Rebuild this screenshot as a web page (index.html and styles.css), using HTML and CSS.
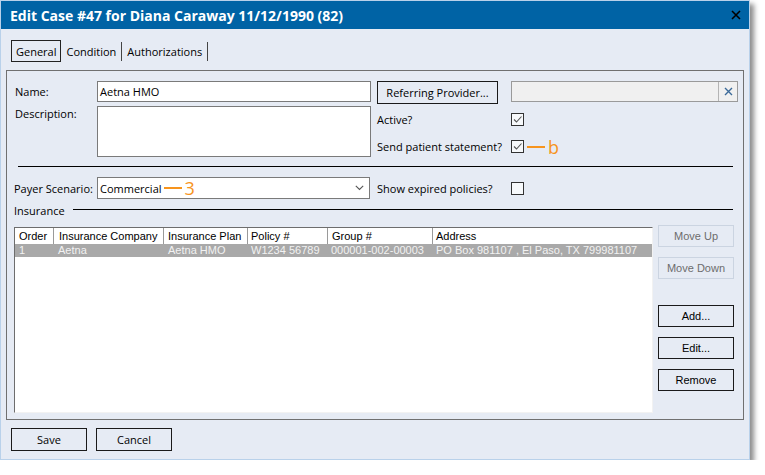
FILE: index.html
```html
<!DOCTYPE html>
<html>
<head>
<meta charset="utf-8">
<link rel="stylesheet" href="styles.css">
</head>
<body>
<div class="window">
  <div class="titlebar">
    <span class="title">Edit Case #47 for Diana Caraway 11/12/1990 (82)</span>
    <svg class="close" width="10" height="10" viewBox="0 0 10 10"><path d="M1 1 L9 9 M9 1 L1 9" stroke="#000" stroke-width="1.6" fill="none"/></svg>
  </div>
  <div class="tabs">
    <span class="tab active">General</span>
    <span class="tab">Condition</span>
    <span class="tab-sep"></span>
    <span class="tab">Authorizations</span>
    <span class="tab-sep"></span>
  </div>
  <div class="panel">
    <div class="top-grid">
      <span class="lbl name-lbl">Name:</span>
      <div class="input name-input">Aetna HMO</div>
      <button class="btn ref-btn">Referring Provider...</button>
      <div class="ref-field">
        <span class="ref-text"></span>
        <span class="ref-clear"><svg width="9" height="9" viewBox="0 0 9 9"><path d="M1 1 L8 8 M8 1 L1 8" stroke="#3b6a99" stroke-width="1.4" fill="none"/></svg></span>
      </div>
      <span class="lbl desc-lbl">Description:</span>
      <div class="textarea"></div>
      <span class="lbl rlbl row2">Active?</span>
      <span class="check row2c"><svg width="11" height="11" viewBox="0 0 11 11"><path d="M2 5.5 L4.5 8 L9.5 2.5" stroke="#555" stroke-width="1.1" fill="none"/></svg></span>
      <span class="lbl rlbl row3">Send patient statement?</span>
      <span class="check-wrap row3c">
        <span class="check"><svg width="11" height="11" viewBox="0 0 11 11"><path d="M2 5.5 L4.5 8 L9.5 2.5" stroke="#555" stroke-width="1.1" fill="none"/></svg></span>
        <span class="anno"><span class="dash"></span>b</span>
      </span>
    </div>
    <div class="divider"></div>
    <div class="payer-row">
      <span class="lbl payer-lbl">Payer Scenario:</span>
      <div class="select">
        <span class="sel-text">Commercial</span>
        <span class="anno"><span class="dash"></span>3</span>
        <svg class="chev" width="9" height="6" viewBox="0 0 9 6"><path d="M0.8 0.8 L4.5 4.5 L8.2 0.8" stroke="#555" stroke-width="1.1" fill="none"/></svg>
      </div>
      <span class="lbl rlbl">Show expired policies?</span>
      <span class="check"></span>
    </div>
    <div class="ins-head">
      <span class="ins-lbl">Insurance</span>
      <span class="ins-line"></span>
    </div>
    <div class="ins-body">
      <div class="table">
        <div class="trow thead">
          <span class="c c1">Order</span>
          <span class="c c2">Insurance Company</span>
          <span class="c c3">Insurance Plan</span>
          <span class="c c4">Policy #</span>
          <span class="c c5">Group #</span>
          <span class="c c6">Address</span>
        </div>
        <div class="trow tdata">
          <span class="c c1">1</span>
          <span class="c c2">Aetna</span>
          <span class="c c3">Aetna HMO</span>
          <span class="c c4">W1234 56789</span>
          <span class="c c5">000001-002-00003</span>
          <span class="c c6">PO Box 981107 , El Paso, TX 799981107</span>
        </div>
      </div>
      <div class="side">
        <button class="sbtn disabled">Move Up</button>
        <button class="sbtn disabled">Move Down</button>
        <button class="sbtn add">Add...</button>
        <button class="sbtn">Edit...</button>
        <button class="sbtn">Remove</button>
      </div>
    </div>
  </div>
  <div class="footer">
    <button class="btn fbtn">Save</button>
    <button class="btn fbtn">Cancel</button>
  </div>
</div>
</body>
</html>
```

FILE: styles.css
```css
* { box-sizing: border-box; }
body {
  margin: 0;
  background: #ffffff;
  font-family: "Open Sans", "Noto Sans", sans-serif;
  font-size: 11px;
  color: #000;
}
.window {
  width: 750px;
  height: 460px;
  border: 1px solid #b9d1ea;
  background: #e6ebf4;
  box-shadow: 4px 4px 5px rgba(0, 0, 0, 0.45);
  display: flex;
  flex-direction: column;
}
.titlebar {
  flex: none;
  height: 28px;
  background: #0063a5;
  color: #fff;
  display: flex;
  align-items: center;
  justify-content: space-between;
  padding: 0 8px 0 9px;
}
.title { font-weight: 700; font-size: 14px; }
.close { display: block; }

.tabs {
  display: flex;
  align-items: center;
  height: 22px;
  margin: 11px 0 0 10px;
}
.tab {
  height: 22px;
  display: flex;
  align-items: center;
  padding: 0 5px;
}
.tab.active {
  border: 1px solid #222;
  padding: 0 4px;
}
.tab-sep { width: 1px; height: 19px; background: #444; }

.panel {
  flex: none;
  margin: 8px 0 0 5px;
  width: 738px;
  height: 350px;
  border: 1px solid #707070;
}
.top-grid {
  display: grid;
  grid-template-columns: 82px 274px 6px 134px 227px;
  grid-template-rows: 25px 27px 27px;
  margin: 10px 0 0 8px;
}
.lbl { white-space: nowrap; }
.name-lbl { grid-column: 1; grid-row: 1; line-height: 21px; align-self: start; }
.name-input {
  grid-column: 2; grid-row: 1;
  height: 21px;
  align-self: start;
}
.input, .textarea, .select {
  background: #fff;
  border: 1px solid #7a7a7a;
}
.input { padding: 0 2px; line-height: 19px; }
.ref-btn { grid-column: 4; grid-row: 1; width: 121px; height: 23px; align-self: start; }
.btn {
  font-family: "Open Sans", "Noto Sans", sans-serif;
  font-size: 11px;
  background: transparent;
  border: 1px solid #1a1a1a;
  color: #000;
  padding: 0;
}
.ref-field {
  grid-column: 5; grid-row: 1;
  height: 21px;
  align-self: start;
  display: flex;
  background: #f0f0f0;
  border: 1px solid #9a9a9a;
}
.ref-text { flex: 1; }
.ref-clear {
  width: 19px;
  border-left: 1px solid #b4b4b4;
  display: flex;
  align-items: center;
  justify-content: center;
}
.ref-clear svg { display: block; }
.desc-lbl { grid-column: 1; grid-row: 2; align-self: start; line-height: 14px; margin-top: 1px; }
.textarea { grid-column: 2; grid-row: 2 / 4; height: 51px; align-self: start; }
.rlbl { align-self: center; grid-column: 4; }
.row2 { grid-row: 2; }
.row3 { grid-row: 3; }
.row2c { grid-column: 5; grid-row: 2; align-self: center; }
.row3c { grid-column: 5; grid-row: 3; align-self: center; }
.check {
  width: 13px;
  height: 13px;
  border: 1px solid #333;
  background: #f7f9fb;
  display: flex;
  align-items: center;
  justify-content: center;
}
.check svg { display: block; }
.check-wrap { display: flex; align-items: center; }
.anno {
  display: flex;
  align-items: center;
  color: #f7941d;
  font-size: 18px;
  line-height: 18px;
  margin-left: 3px;
}
.dash { width: 18px; height: 2px; background: #f7941d; margin-right: 3px; }

.divider { height: 1px; background: #000; margin: 6px 10px 0 11px; }

.payer-row {
  display: grid;
  grid-template-columns: 82px 273px 7px 134px 227px;
  height: 22px;
  margin: 10px 0 0 8px;
  align-items: center;
}
.payer-lbl { margin-left: -1px; }
.select {
  grid-column: 2;
  height: 22px;
  display: flex;
  align-items: center;
  padding: 0 5px 0 2px;
}
.select .anno { margin-left: 2px; }
.chev { margin-left: auto; display: block; }
.payer-row .rlbl { grid-column: 4; }
.payer-row .check { grid-column: 5; }

.ins-head {
  display: flex;
  height: 14px;
  margin: 5px 10px 0 7px;
  align-items: center;
}
.ins-lbl { line-height: 14px; }
.ins-line { flex: 1; height: 1px; background: #000; margin-left: 8px; align-self: flex-start; margin-top: 5px; }

.ins-body {
  display: flex;
  margin: 7px 0 0 7px;
}
.table {
  width: 639px;
  height: 186px;
  margin-top: 2px;
  background: #fff;
  border: 1px solid;
  border-color: #6d6d6d #f2f2f2 #f2f2f2 #6d6d6d;
  font-family: "Liberation Sans", Arial, sans-serif;
  font-size: 11px;
}
.trow { display: flex; white-space: nowrap; }
.thead { height: 16px; line-height: 16px; color: #000; }
.tdata { height: 13px; line-height: 13px; background: #a9a9a9; color: #f2f2f2; }
.c { overflow: hidden; border-left: 1px solid transparent; padding-left: 4px; }
.c1 { width: 38px; border-left: 0; }
.c2 { width: 110px; padding-left: 5px; }
.c3 { width: 84px; }
.c4 { width: 80px; padding-left: 3px; }
.c5 { width: 105px; }
.c6 { flex: 1; padding-left: 3px; }
.thead .c2, .thead .c3, .thead .c4, .thead .c5, .thead .c6 { border-left-color: #9a9a9a; }
.tdata .c2, .tdata .c3 { padding-left: 4px; }
.tdata .c5 { padding-left: 3px; }

.side {
  margin-left: 5px;
  width: 76px;
  display: flex;
  flex-direction: column;
  gap: 10px;
}
.sbtn {
  height: 22px;
  width: 76px;
  font-family: "Liberation Sans", Arial, sans-serif;
  font-size: 11px;
  background: transparent;
  border: 1px solid #1a1a1a;
  color: #000;
  padding: 0;
}
.sbtn.disabled { border-color: #cbd4e1; color: #6d6d6d; }
.sbtn.add { margin-top: 16px; }

.footer {
  display: flex;
  gap: 9px;
  margin: 8px 0 0 10px;
}
.fbtn { width: 76px; height: 23px; }
```
